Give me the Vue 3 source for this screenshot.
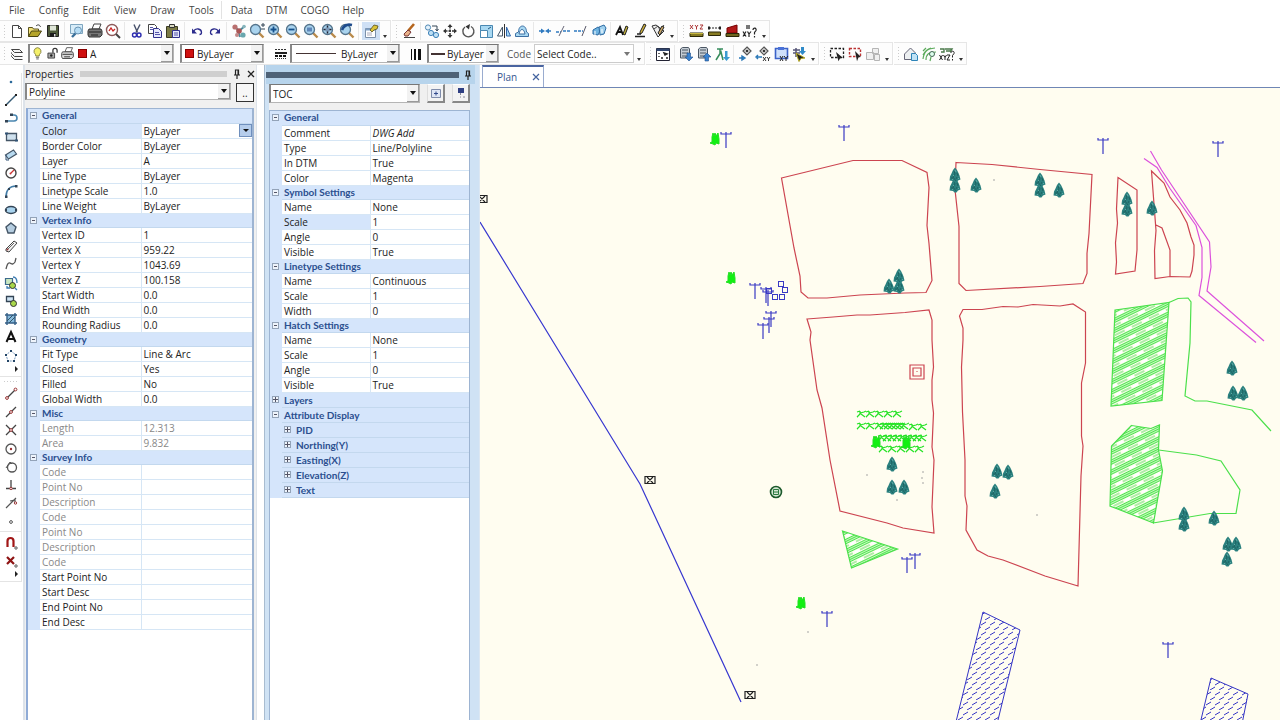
<script setup>
import { ref } from 'vue'

const menus = [
  ['File', 'Config', 'Edit', 'View', 'Draw', 'Tools'],
  ['Data', 'DTM', 'COGO', 'Help'],
]

const lens = (c) =>
  `<path d="M10.5 10.5l5 5" stroke="#b98a4a" stroke-width="2.4"/><circle cx="7.5" cy="7.5" r="5" fill="#a9d3ee" stroke="#55748c" stroke-width="1.3"/>${c}`
const printer = (body) =>
  `<path d="M6 7l2-5h7l-2 5z" fill="#fff" stroke="#444"/><path d="M3 7h12l1 2v4l-2 2H3l-1-2V9z" fill="${body}" stroke="#333"/><path d="M3 10h12M5 13h7" stroke="#222"/>`

const icons = {
  new: '<path d="M4.500 3.500h6l3 3v9h-9z" fill="#fff" stroke="#444"/><path d="M10.500 3.500v3h3" fill="none" stroke="#444"/>',
  open: '<path d="M2.500 14.500v-9h4l1 1.500h5v2" fill="#f3e27a" stroke="#5a5320"/><path d="M2.500 14.500l3-5.500h10l-3.500 5.500z" fill="#b5a52a" stroke="#4a4410"/><path d="M10 4c2-2 4-1 4.500 1" fill="none" stroke="#333"/>',
  save: '<path d="M3.500 3.500h11v11h-11z" fill="#4e5a3a" stroke="#222"/><path d="M6 3.500h6v5H6z" fill="#dfe6d8"/><path d="M6 11h6v3.500H6z" fill="#1c1c1c"/><path d="M10 12h1.500v2.500H10z" fill="#ddd"/>',
  preview: '<path d="M2.500 2.500h12v9h-12z" fill="#d7ecf8" stroke="#7fa6c0"/><path d="M4 15l4-4" stroke="#3a6f9a" stroke-width="2.400"/><circle cx="10" cy="8.500" r="3.500" fill="#b6ddf5" stroke="#6a94b4"/>',
  print: printer('#777'),
  printGrey: printer('#d9d9d9'),
  find: '<circle cx="8" cy="8" r="5.500" fill="#fff" stroke="#8c5a5a" stroke-width="1.400"/><path d="M12 12l4 4" stroke="#444" stroke-width="2"/><path d="M5 9l2-3 2 3 2-2" stroke="#c22" fill="none" stroke-width="1.300"/>',
  cut: '<path d="M6 2.500l3.500 8M12 2.500l-4 8" stroke="#46506a" stroke-width="1.400"/><circle cx="6.500" cy="13" r="2" fill="none" stroke="#2c2cb0" stroke-width="1.400"/><circle cx="11" cy="13" r="2" fill="none" stroke="#2c2cb0" stroke-width="1.400"/>',
  copy: '<path d="M2.500 2.500h6l2 2v7h-8z" fill="#fff" stroke="#444"/><path d="M7.500 6.500h5l3 3v6h-8z" fill="#e6e9fb" stroke="#33338f"/><path d="M9 10.500h4M9 12.500h5M4 5.500h3M4 7.500h3" stroke="#55a"/>',
  paste: '<path d="M2.500 4.500h11v11h-11z" fill="#7b7a45" stroke="#3a3a22"/><path d="M5.500 2.500h5v3h-5z" fill="#d8d8c0" stroke="#333"/><path d="M8.500 8.500h7v7h-7z" fill="#e6e9fb" stroke="#33338f"/><path d="M10 11h4M10 13h4" stroke="#55a"/>',
  undo: '<path d="M5.500 9.500c2-4 8-3 8 1 0 1-1 2-2 2" fill="none" stroke="#2b2b8c" stroke-width="1.300"/><path d="M4 6.500v5h5z" fill="#2b2b8c"/>',
  redo: '<path d="M12.500 9.500c-2-4-8-3-8 1 0 1 1 2 2 2" fill="none" stroke="#2b2b8c" stroke-width="1.300"/><path d="M14 6.500v5H9z" fill="#2b2b8c"/>',
  node: '<path d="M4 4l5 5 6-5M8 9l2 6" stroke="#4d8a9b" stroke-width="2" fill="none"/><circle cx="5" cy="5" r="2.600" fill="#b97070"/><circle cx="9" cy="9" r="2.800" fill="#a55"/><circle cx="13" cy="13" r="2.600" fill="#6aa7ae"/><circle cx="7" cy="13" r="2" fill="#c38a8a"/><circle cx="14" cy="4.500" r="1.800" fill="#88b5bd"/>',
  zoomDyn: lens('<path d="M13 3h4M15 1v4M13 7h4" stroke="#345" stroke-width="1"/>'),
  zoomIn: lens('<path d="M4.500 7.500h6M7.500 4.500v6" stroke="#14508c" stroke-width="1.800"/>'),
  zoomOut: lens('<path d="M4.500 7.500h6" stroke="#14508c" stroke-width="1.800"/>'),
  zoomWin: lens('<path d="M5 5.500h5v4H5z" fill="#5f86b8"/>'),
  zoomExt: lens('<path d="M3.500 7.500h8M7.500 3.500v8" stroke="#223" stroke-width="1.500"/><path d="M5.500 5.500h4v4h-4z" fill="#7b98b8"/>'),
  zoomPrev: lens('<path d="M4 8c2-5 6-6 10-5" stroke="#1d4a8c" stroke-width="2.600" fill="none"/>'),
  props: '<path d="M3.500 6.500h10v9h-10z" fill="#fff" stroke="#7b8fa8"/><path d="M3.500 6.500h10v2h-10z" fill="#7f9fc4"/><path d="M5 11h5M5 13h5" stroke="#aab"/><path d="M8 8l4-5 4 1-1 3-3 1-2 2z" fill="#d9c23a" stroke="#59511c" stroke-width=".8"/>',
  erase: '<path d="M8 9l6-7" stroke="#b5651d" stroke-width="2.600"/><path d="M4 12l4-4 3 2-3 4H5z" fill="#e8b28a" stroke="#733"/><path d="M4 15.500h11" stroke="#444"/>',
  copyObj: '<circle cx="5" cy="5.500" r="2.600" fill="#e3f1fb" stroke="#4f88b4"/><circle cx="8" cy="11" r="2.600" fill="#bfe0f5" stroke="#3f82b8"/><circle cx="13" cy="13" r="2.600" fill="#bfe0f5" stroke="#3f82b8"/><path d="M9 4h5v4M12.500 7l1.500 2 1.500-2" fill="none" stroke="#345"/>',
  move: '<path d="M9 4v10M4 9h10" stroke="#333" stroke-width="1.500" stroke-dasharray="2.500 1"/><path d="M9 2l2.500 3h-5zM9 16l2.500-3h-5zM2 9l3-2.500v5zM16 9l-3-2.500v5z" fill="#333"/>',
  rotate: '<path d="M6 5a5.500 5.500 0 1 0 6-.5" fill="none" stroke="#555" stroke-width="1.400"/><path d="M11 2L6.500 4.500l3.500 3z" fill="#333"/>',
  scale: '<path d="M3.500 3.500h12v12h-12z" fill="#a8d8f2" stroke="#4a88b2"/><path d="M3.500 8.500h7v7h-7z" fill="#fff" stroke="#4a88b2"/><path d="M11 7l3-2" stroke="#24587f"/>',
  mirror: '<path d="M7.500 5v9h-5z" fill="#fff" stroke="#456"/><path d="M11.500 5v9h4z" fill="#a8d8f2" stroke="#36a"/><path d="M9.500 2v14" stroke="#333"/>',
  offset: '<path d="M2.500 14.500v-3l3-1.500c0-8 8-8 8 0l2 1.500v3z" fill="#a8d8f2" stroke="#3d6fa3"/><path d="M6 12c1-6 5-6 6 0z" fill="#fff" stroke="#3d6fa3"/>',
  join: '<path d="M3 9h4M11 9h4" stroke="#2f7ac0" stroke-width="1.400"/><path d="M5 6.500L9 9l-4 2.500zM13 6.500L9 9l4 2.500z" fill="#2f7ac0"/>',
  trim: '<path d="M2 10h5M9 9h7" stroke="#2f7ac0" stroke-width="1.400" stroke-dasharray="3 1"/><path d="M5 14l5-10" stroke="#667"/>',
  extend: '<path d="M2 9h9" stroke="#2f7ac0" stroke-width="1.400" stroke-dasharray="3 1"/><path d="M10 14l4-10" stroke="#556"/>',
  explode: '<path d="M3 8l5-3 3 2-3 6-5-1z" fill="#6fb3e0" stroke="#2d6ba3"/><path d="M9 5l5-2 2 3-2 6-4 1z" fill="#9fd0ee" stroke="#2d6ba3"/><path d="M5 9v4M12 7v4" stroke="#fff"/>',
  textEdit: '<path d="M3 13L7 5l3 8M5 10h4" fill="none" stroke="#111" stroke-width="1.800"/><path d="M10 12l3-8 2 1-3 8z" fill="#c5b33c" stroke="#222"/>',
  pencil: '<path d="M9 10l4-8 2 1-4 8-2 1z" fill="#d4b53a" stroke="#222"/><path d="M4 14.500h10M6 12h4" stroke="#222" stroke-width="1.600"/>',
  tagEdit: '<path d="M3 4l4-1 8 6-6 6z" fill="#eee" stroke="#333"/><path d="M5 7l4-3 2 4 4-5" stroke="#444" fill="none"/><path d="M9 11l4-7 2 1-4 8z" fill="#c9a86a" stroke="#222"/>',
  xyz: '<path d="M3 3l3 4M6 3L3 7M8 3l1.500 2L11 3M9.500 5v2.500M13 3h3l-3 4h3" stroke="#a33" fill="none"/><path d="M3 11h13v3.500H3z" fill="#877b22" stroke="#2c2808"/><path d="M3 11.500h13" stroke="#c8b840"/>',
  dist: '<path d="M4 6h11" stroke="#222" stroke-dasharray="2 1"/><path d="M3 4.500h2v3H3zM14 4.500h2v3h-2z" fill="#222"/><path d="M3.500 10h12v3.500h-12z" fill="#877b22" stroke="#2c2808"/>',
  area: '<path d="M4 11V6l10-3v8z" fill="#b11818" stroke="#700"/><path d="M3 11.500h13v3H3z" fill="#6f661f" stroke="#2c2808"/>',
  ask: '<path d="M5 3h4v4H5z" fill="#777"/><path d="M2 9.500l3 5M5 9.500l-3 5M6.500 9.500L8 12l2-2.500M8 12v3M12 8c0-3 4-2 3 .5l-1.500 2v2M13.500 14v1.500" stroke="#222" fill="none" stroke-width="1.200"/>',
  layers: '<path d="M3.500 4.500h8l3 3h-8zM3.500 7.500v1l3 3h8M3.500 10.500v1l3 3h8" fill="#f4f4f4" stroke="#444"/>',
  bulb: '<path d="M9 2a4.500 4.500 0 0 1 2.500 8l-.5 2H7l-.5-2A4.500 4.500 0 0 1 9 2z" fill="#f4f06a" stroke="#77742a"/><path d="M7 13.500h4M7.500 15.500h3" stroke="#444"/>',
  lock: '<path d="M3.500 8.500h8v6h-8z" fill="#aaa" stroke="#333"/><path d="M9.500 8V5c0-3 5-3 5 0v3" fill="none" stroke="#333" stroke-width="1.500"/><circle cx="7.500" cy="11.500" r="1.500" fill="#222"/>',
  linetypes: '<path d="M3 4.500h12" stroke="#333" stroke-dasharray="2 1"/><path d="M3 8h12" stroke="#222" stroke-width="2"/><path d="M3 11h12" stroke="#111" stroke-width="2" stroke-dasharray="3 1"/><path d="M3 13.500h12" stroke="#333" stroke-dasharray="1 1"/>',
  weights: '<path d="M4.500 4v11" stroke="#111"/><path d="M8 4v11" stroke="#111" stroke-width="2"/><path d="M12.500 4v11" stroke="#111" stroke-width="3"/>',
  window: '<path d="M2.500 3.500h13v12h-13z" fill="#fff" stroke="#223"/><path d="M2.500 3.500h13v2.500h-13z" fill="#31466f"/><path d="M5 8v1M5 11v1M7 13h2M10 8l3 1-2 1zM12 13h2" stroke="#222" fill="none" stroke-width="1.400"/>',
  dbDown: '<path d="M3.500 4l2-1.500h6l1 1.500v9h-9z" fill="#c5cdd5" stroke="#4b5663"/><path d="M5 5h6M5 8h6M5 11h6" stroke="#4b5663"/><path d="M10 8h3.500v4H16l-4 4-4-4h2z" fill="#3a83d0" stroke="#1f4e8c" stroke-width=".6"/>',
  dbUp: '<path d="M3.500 4l2-1.500h6l1 1.500v9h-9z" fill="#c5cdd5" stroke="#4b5663"/><path d="M5 5h6M5 8h6M5 11h6" stroke="#4b5663"/><path d="M10 16h3.500v-4H16l-4-4-4 4h2z" fill="#3a83d0" stroke="#1f4e8c" stroke-width=".6"/>',
  survey: '<path d="M3 15l5-8 2 8M4 4h6M7 4v4" fill="none" stroke="#368c5c" stroke-width="1.500"/><path d="M12 6h2.500v6H17l-3.500 4-3.500-4h2z" fill="#3a9bd0"/>',
  ptMove: '<path d="M11 2l4 4-4 4-4-4z" fill="#ddd" stroke="#555" stroke-width="1.200"/><circle cx="11" cy="6" r="1.300" fill="#333"/><path d="M3 13h4M6 11l3 2-3 2z" stroke="#2a78b8" fill="#2a78b8" stroke-width="1.400"/>',
  ptXy: '<path d="M10 2l4 4-4 4-4-4z" fill="#ddd" stroke="#555" stroke-width="1.200"/><circle cx="10" cy="6" r="1.300" fill="#333"/><path d="M3 12h5M4 10l-2 2 2 2" stroke="#2a78b8" fill="none" stroke-width="1.400"/><path d="M9 12l3 4M12 12l-3 4M13 12l1.500 2L16 12M14.500 14v2" stroke="#333" fill="none"/>',
  clipXy: '<path d="M3.500 3.500h12v10h-12z" fill="#cfe0fb" stroke="#3b62c8" stroke-width="1.600"/><path d="M6 2h6v3H6z" fill="#4a72d8"/><path d="M8 11l3 5M11 11l-3 5M12 11l2 2.500 2-2.500M14 13.500V16" stroke="#222" fill="none"/>',
  snapPick: '<path d="M3 5h7M3 8h7M6 3v9" stroke="#557" stroke-width="1.500"/><path d="M11 2h3v4h2l-3.500 4L9 6h2z" fill="#2f8ac8"/><path d="M6 8l9 5-4 .5-2 3z" fill="#222" stroke="#b5a820"/>',
  selRect: '<path d="M2.500 3.500h13v9h-13z" fill="none" stroke="#222" stroke-width="1.300" stroke-dasharray="2.500 1.500"/><path d="M8 7l7 6-3 .3-1.500 3z" fill="#222"/>',
  selRed: '<path d="M3.500 3.500h11v8h-11z" fill="none" stroke="#b33" stroke-width="1.400" stroke-dasharray="2.500 1.500"/><path d="M9 6l6 6-2.500.3-1.500 4z" fill="#222"/>',
  group: '<path d="M2.500 7.500h7v7h-7zM8.500 3.500h6v5h-6zM10.500 9.500h5v6h-5z" fill="#f0f0f0" stroke="#b5b5b5"/>',
  house: '<path d="M2.500 9l6-6 5 5v6.500h-11z" fill="#eceff1" stroke="#667"/><path d="M9.500 8.500h4l2 2v5h-6z" fill="#bfe2f5" stroke="#2d84b8"/>',
  contour: '<path d="M3 14c1-7 3-10 12-11M6 15c0-6 3-8 10-8M3 10c2-4 4-6 8-7M3 6l3-3M10 16l1-4" fill="none" stroke="#5cab5c" stroke-width="1.200"/><circle cx="12" cy="9" r="2.500" fill="#dfe" stroke="#465"/>',
  xyzAsk: '<path d="M2 4h4v3H3M7 4h7l-2 3M8 6h4" stroke="#4b7a4b" fill="none" stroke-width="1.400"/><path d="M1.500 10l3 5M4.500 10l-3 5M5.500 10L7 12.500 8.500 10M7 12.500V15M9 10h3l-3 5h3M13 8c0-3 4-2 3 .5l-1.500 2v2M14.500 14v1.500" stroke="#222" fill="none"/>',
  point: '<circle cx="9" cy="9" r="1.300" fill="#2c6a9a"/>',
  line: '<path d="M4 14L14 4" stroke="#345a75" stroke-width="1.400"/><path d="M3 13h2v2H3zM13 3h2v2h-2z" fill="#222"/>',
  polyline: '<path d="M4 12h8c4 0 4-6 0-6h-2" stroke="#4b87b0" stroke-width="1.600" fill="none"/><path d="M3 11h3v2.500H3zM8 4.500h3V7H8z" fill="#345"/>',
  rect: '<path d="M4.500 5.500h10v7h-10z" fill="#cfe1ee" stroke="#456" stroke-width="1.300"/><path d="M3 4.500h3v2H3zM13 11.500h3v2h-3z" fill="#357"/>',
  rotRect: '<path d="M3.500 9l8-5 3 4-8 5z" fill="#b8daf0" stroke="#456" stroke-width="1.200"/><path d="M4 9v5h3" stroke="#357" fill="none"/>',
  circle: '<circle cx="9" cy="9" r="5" fill="#fff" stroke="#444" stroke-width="1.400"/><path d="M9 9l3-3" stroke="#c33" stroke-width="1.300"/><circle cx="8.500" cy="9.500" r="1" fill="#c33"/>',
  arc: '<path d="M4 15C4 8 8 4 14 4" fill="none" stroke="#3f7aa5" stroke-width="1.600"/><path d="M3 13.500h2.500V16H3zM13 3h2.500v2.500H13zM6 6h2v2H6z" fill="#345"/>',
  ellipse: '<ellipse cx="9" cy="9" rx="5.500" ry="3.500" fill="#a9d3ee" stroke="#345" stroke-width="1.500"/><path d="M3 8h2v2H3zM13 8h2v2h-2z" fill="#345"/>',
  polygon: '<path d="M9 4l5 4-2 6H6L4 8z" fill="#b5cde0" stroke="#456" stroke-width="1.400"/>',
  ruler: '<path d="M4 12l8-8 3 2-8 9-3-1z" fill="#f3f3f3" stroke="#444"/><path d="M6 12l6-6" stroke="#666"/><circle cx="5.500" cy="12.500" r="1" fill="#933"/>',
  spline: '<path d="M4 14c1-4 2-7 4-6s3 2 5-1l1-4" fill="none" stroke="#555" stroke-width="1.300"/>',
  blockIn: '<path d="M3.500 4.500h7v6h-7z" fill="#c9e7c0" stroke="#3c6a8c" stroke-width="1.200"/><circle cx="10.500" cy="11.500" r="3" fill="#a9d84a" stroke="#333"/><path d="M11 3c3 0 4 2 4 6M5 12v2h3M13 14l2 2" fill="none" stroke="#3b7ab0" stroke-width="1.300"/>',
  block: '<path d="M4.500 4.500h7v5h-7z" fill="#cfe4f4" stroke="#345" stroke-width="1.300"/><circle cx="11.500" cy="11.500" r="3" fill="#a9d84a" stroke="#333"/>',
  hatch: '<path d="M5 5h8v8H5z" fill="#86b9dc"/><path d="M5 3v12M13 3v12M3 5h12M3 13h12" stroke="#345f86" stroke-width="1.400"/><path d="M5 11l6-6M7 13l6-6" stroke="#356"/>',
  text: '<path d="M4.500 14L9 4l4.500 10M6 11h6" fill="none" stroke="#111" stroke-width="2"/>',
  points: '<path d="M9 4l5 4-2 6H6L4 8z" fill="none" stroke="#79b" stroke-dasharray="2 1"/><path d="M8 3h2v2H8zM13 7h2v2h-2zM11 13h2v2h-2zM5 13h2v2H5zM3 7h2v2H3z" fill="#246"/>',
  snapEnd: '<path d="M5 13l8-8" stroke="#444" stroke-width="1.200"/><circle cx="5" cy="13" r="1.400" fill="#fff" stroke="#933"/><circle cx="13.500" cy="4.500" r="1.400" fill="#fff" stroke="#933"/>',
  snapMid: '<path d="M4 14L14 4" stroke="#444" stroke-width="1.200"/><circle cx="9" cy="9" r="1.400" fill="#fff" stroke="#933"/>',
  snapInt: '<path d="M4 4l10 10M14 4L4 14" stroke="#444" stroke-width="1.300"/><circle cx="9" cy="9" r="1.400" fill="#fff" stroke="#933"/>',
  snapCen: '<circle cx="9" cy="9" r="5" fill="none" stroke="#555" stroke-width="1.300"/><circle cx="9" cy="9" r="1.200" fill="#933"/>',
  snapQuad: '<circle cx="10" cy="9.500" r="4.500" fill="none" stroke="#555" stroke-width="1.300"/><path d="M4 10l4-6 2 2" fill="none" stroke="#555"/>',
  snapPerp: '<path d="M9 4v8M4 12.500h10" stroke="#444" stroke-width="1.300"/><circle cx="9" cy="12.500" r="1.200" fill="#fff" stroke="#933"/>',
  snapNear: '<path d="M4 14L14 4M8 7l5-1v4" fill="none" stroke="#555" stroke-width="1.200"/><circle cx="13.500" cy="9" r="1.200" fill="#fff" stroke="#933"/>',
  snapNode: '<circle cx="9" cy="9" r="1.400" fill="#fff" stroke="#555"/>',
  magnet: '<path d="M5.500 13V7c0-4 6-4 6 0v6" fill="none" stroke="#a11616" stroke-width="2.200"/><circle cx="14" cy="14" r="1.200" fill="#fff" stroke="#555"/>',
  snapOff: '<path d="M5 5l7 7M12 5l-7 7" stroke="#8f1414" stroke-width="2.200"/><circle cx="14" cy="14" r="1.200" fill="#fff" stroke="#555"/>',
}

const topBars = [
  [['new', 'open', 'save'], ['preview', 'print', 'find'], ['cut', 'copy', 'paste'], ['undo', 'redo'], ['node', 'zoomDyn', 'zoomIn', 'zoomOut', 'zoomWin', 'zoomExt', 'zoomPrev'], ['props']],
  [['erase'], ['copyObj', 'move', 'rotate', 'scale', 'mirror', 'offset'], ['join', 'trim', 'extend', 'explode'], ['textEdit', 'pencil', 'tagEdit']],
  [['xyz', 'dist', 'area', 'ask']],
]
const dataBars = [
  [['window'], ['dbDown', 'dbUp', 'survey'], ['ptMove', 'ptXy', 'clipXy', 'snapPick']],
  [['selRect', 'selRed', 'group']],
  [['house', 'contour', 'xyzAsk']],
]
const drawTools = ['point', 'line', 'polyline', 'rect', 'rotRect', 'circle', 'arc', 'ellipse', 'polygon', 'ruler', 'spline', 'blockIn', 'block', 'hatch', 'text', 'points']
const snapTools = ['snapEnd', 'snapMid', 'snapInt', 'snapCen', 'snapQuad', 'snapPerp', 'snapNear', 'snapNode']
const snapModes = ['magnet', 'snapOff']

const blank = (names, off) => names.map((n) => ({ n, v: '', off }))
const properties = [
  { title: 'General', rows: [
    { n: 'Color', v: 'ByLayer', sel: true, drop: true }, { n: 'Border Color', v: 'ByLayer' }, { n: 'Layer', v: 'A' },
    { n: 'Line Type', v: 'ByLayer' }, { n: 'Linetype Scale', v: '1.0' }, { n: 'Line Weight', v: 'ByLayer' } ] },
  { title: 'Vertex Info', rows: [
    { n: 'Vertex ID', v: '1' }, { n: 'Vertex X', v: '959.22' }, { n: 'Vertex Y', v: '1043.69' }, { n: 'Vertex Z', v: '100.158' },
    { n: 'Start Width', v: '0.0' }, { n: 'End Width', v: '0.0' }, { n: 'Rounding Radius', v: '0.0' } ] },
  { title: 'Geometry', rows: [
    { n: 'Fit Type', v: 'Line & Arc' }, { n: 'Closed', v: 'Yes' }, { n: 'Filled', v: 'No' }, { n: 'Global Width', v: '0.0' } ] },
  { title: 'Misc', rows: [ { n: 'Length', v: '12.313', off: true }, { n: 'Area', v: '9.832', off: true } ] },
  { title: 'Survey Info', rows: [
    ...blank(['Code', 'Point No', 'Description', 'Code', 'Point No', 'Description', 'Code'], true),
    ...blank(['Start Point No', 'Start Desc', 'End Point No', 'End Desc'], false) ] },
]
const toc = [
  { title: 'General', rows: [
    { n: 'Comment', v: 'DWG Add', em: true }, { n: 'Type', v: 'Line/Polyline' }, { n: 'In DTM', v: 'True' }, { n: 'Color', v: 'Magenta' } ] },
  { title: 'Symbol Settings', rows: [
    { n: 'Name', v: 'None' }, { n: 'Scale', v: '1', sel: true }, { n: 'Angle', v: '0' }, { n: 'Visible', v: 'True' } ] },
  { title: 'Linetype Settings', rows: [ { n: 'Name', v: 'Continuous' }, { n: 'Scale', v: '1' }, { n: 'Width', v: '0' } ] },
  { title: 'Hatch Settings', rows: [
    { n: 'Name', v: 'None' }, { n: 'Scale', v: '1' }, { n: 'Angle', v: '0' }, { n: 'Visible', v: 'True' } ] },
  { title: 'Layers', closed: true, rows: [] },
  { title: 'Attribute Display', rows: [], subs: ['PID', 'Northing(Y)', 'Easting(X)', 'Elevation(Z)', 'Text'] },
]
const panels = [
  { key: 'props', data: properties },
  { key: 'toc', data: toc },
]
const objectType = ref('Polyline')
const tocType = ref('TOC')

const trees = [[976, 185], [1059, 190], [1152, 208], [889, 286], [892, 464], [892, 487], [904, 487], [997, 471], [1008, 472], [995, 491], [1232, 368], [1233, 393], [1243, 393], [1214, 518], [1228, 544], [1236, 544], [1227, 559]]
const tallTrees = [[955, 180], [1040, 185], [1127, 204], [899, 281], [1184, 519]]
const poles = [[726, 132], [844, 125], [1103, 138], [1218, 141], [755, 283], [766, 287], [768, 290], [771, 311], [769, 317], [763, 323], [907, 557], [915, 553], [827, 611], [1168, 642]]
const boxes = [[781, 284], [785, 290], [782, 297], [775, 297], [769, 291]]
const bushes = [[715, 138], [731, 277], [801, 602], [876, 441], [906, 442]]
const stations = [[482, 199], [650, 480], [750, 695]]
const specks = [[994, 180], [867, 475], [923, 472], [922, 478], [923, 483], [897, 500], [1037, 515], [808, 632], [757, 665]]
const range = (a, b, y, step = 9) => Array.from({ length: Math.floor((b - a) / step) + 1 }, (_, i) => [a + i * step, y])
const grass = [...range(861, 898, 414), ...range(861, 880, 426), ...range(884, 906, 426, 4), ...range(913, 923, 427), ...range(882, 926, 438, 5), ...range(883, 922, 449)]
</script>

<template>
  <main class="app">
    <nav class="menu">
      <div v-for="(g, i) in menus" :key="i" class="menu-group">
        <button v-for="m in g" :key="m" type="button">{{ m }}</button>
      </div>
    </nav>

    <div class="bars">
      <div v-for="(bar, i) in topBars" :key="i" class="bar">
        <span class="grip"></span>
        <div v-for="(g, j) in bar" :key="j" class="group">
          <button v-for="n in g" :key="n" type="button" class="tool" :class="{ active: n === 'props' }" :aria-label="n">
            <svg viewBox="0 0 18 18" v-html="icons[n]"></svg>
          </button>
        </div>
        <button type="button" class="more" aria-label="More"></button>
      </div>
    </div>

    <div class="bars">
      <div class="bar layer-bar">
        <span class="grip"></span>
        <button type="button" class="tool" aria-label="Layers"><svg viewBox="0 0 18 18" v-html="icons.layers"></svg></button>
        <div class="combo layer">
          <svg v-for="n in ['bulb', 'lock', 'printGrey']" :key="n" class="state" viewBox="0 0 18 18" v-html="icons[n]"></svg>
          <span class="swatch"></span>
          <select aria-label="Layer"><option>A</option></select><i class="arrow"></i>
        </div>
        <div class="combo color">
          <span class="swatch"></span>
          <select aria-label="Color"><option>ByLayer</option></select><i class="arrow"></i>
        </div>
        <button type="button" class="tool types" aria-label="Line types"><svg viewBox="0 0 18 18" v-html="icons.linetypes"></svg></button>
        <div class="combo ltype">
          <span class="stroke"></span>
          <select aria-label="Line type"><option>ByLayer</option></select><i class="arrow"></i>
        </div>
        <button type="button" class="tool weights" aria-label="Line weights"><svg viewBox="0 0 18 18" v-html="icons.weights"></svg></button>
        <div class="combo weight">
          <span class="stroke thick"></span>
          <select aria-label="Line weight"><option>ByLayer</option></select><i class="arrow"></i>
        </div>
        <label class="code" for="code">Code</label>
        <div class="combo flat">
          <select id="code"><option>Select Code..</option></select><i class="arrow"></i>
        </div>
        <button type="button" class="more" aria-label="More"></button>
      </div>
      <div v-for="(bar, i) in dataBars" :key="i" class="bar">
        <span class="grip"></span>
        <div v-for="(g, j) in bar" :key="j" class="group">
          <button v-for="n in g" :key="n" type="button" class="tool" :aria-label="n">
            <svg viewBox="0 0 18 18" v-html="icons[n]"></svg>
          </button>
        </div>
        <button type="button" class="more" aria-label="More"></button>
      </div>
    </div>

    <div class="work">
      <aside class="rail">
        <div class="rail-bar">
          <button v-for="n in drawTools" :key="n" type="button" class="tool" :aria-label="n"><svg viewBox="0 0 18 18" v-html="icons[n]"></svg></button>
          <button type="button" class="side" aria-label="More"></button>
        </div>
        <div class="rail-bar snaps">
          <span class="grip flatgrip"></span>
          <button v-for="n in snapTools" :key="n" type="button" class="tool" :aria-label="n"><svg viewBox="0 0 18 18" v-html="icons[n]"></svg></button>
          <div class="modes">
            <button v-for="n in snapModes" :key="n" type="button" class="tool" :aria-label="n"><svg viewBox="0 0 18 18" v-html="icons[n]"></svg></button>
            <button type="button" class="side" aria-label="More"></button>
          </div>
        </div>
      </aside>

      <section v-for="p in panels" :key="p.key" class="panel" :class="p.key">
        <header>
          <h2 v-if="p.key === 'props'">Properties</h2>
          <span class="drag"></span>
          <button type="button" class="pin" aria-label="Pin">
            <svg viewBox="0 0 10 10"><path d="M3.500 1h3v5h-3zM2 6h6M5 6v4" fill="none" stroke="#222" stroke-width="1.200" /><path d="M5.500 1h1.500v5H5.500z" fill="#222" /></svg>
          </button>
          <button v-if="p.key === 'props'" type="button" class="pin" aria-label="Close">
            <svg viewBox="0 0 10 10"><path d="M2 2l6 6M8 2L2 8" stroke="#222" stroke-width="1.300" /></svg>
          </button>
        </header>
        <div class="picker">
          <div class="combo">
            <select v-if="p.key === 'props'" v-model="objectType" aria-label="Object type"><option>Polyline</option></select>
            <select v-else v-model="tocType" aria-label="Contents"><option>TOC</option></select>
            <i class="arrow"></i>
          </div>
          <button v-if="p.key === 'props'" type="button" class="dots">..</button>
          <template v-else>
            <button type="button" class="raised" aria-label="Add">
              <svg viewBox="0 0 12 12"><path d="M1.500 2.500h9v8h-9z" fill="#dfe6f5" stroke="#7f8cab" /><path d="M6 4.500v4M4 6.500h4" stroke="#334a8c" /></svg>
            </button>
            <button type="button" class="raised" aria-label="Assign">
              <svg viewBox="0 0 12 12"><path d="M3 1h6v5H3z" fill="#2f3f83" /><path d="M5.500 6v2M5 10h1M8 10h2" stroke="#889" /></svg>
            </button>
          </template>
        </div>
        <div class="sheet">
          <table>
            <colgroup><col class="c-gut" /><col class="c-name" /><col /></colgroup>
            <tbody v-for="s in p.data" :key="s.title">
              <tr class="cat" :class="{ tall: !s.rows.length }">
                <th class="gut"><button type="button" class="toggle" :class="{ plus: s.closed }" :aria-label="s.title"></button></th>
                <th colspan="2">{{ s.title }}</th>
              </tr>
              <tr v-for="(r, i) in s.rows" :key="i" :class="{ off: r.off, sel: r.sel }">
                <td class="gut"></td>
                <td class="name">{{ r.n }}</td>
                <td class="val" :class="{ em: r.em }">
                  <div class="cell"><span>{{ r.v }}</span><button v-if="r.drop" type="button" class="drop" aria-label="Choose color"></button></div>
                </td>
              </tr>
              <tr v-for="s2 in s.subs" :key="s2" class="sub">
                <td class="gut"></td>
                <th colspan="2"><div class="cell"><button type="button" class="toggle plus" :aria-label="s2"></button>{{ s2 }}</div></th>
              </tr>
            </tbody>
          </table>
        </div>
      </section>

      <section class="view">
        <div class="tabs">
          <div class="tab"><a href="#plan">Plan</a>
            <button type="button" aria-label="Close plan"><svg viewBox="0 0 8 8"><path d="M1 1l6 6M7 1L1 7" stroke="#4464a0" stroke-width="1.200" /></svg></button>
          </div>
        </div>
        <svg class="plan" viewBox="480 88 800 632" preserveAspectRatio="xMinYMin slice">
          <defs>
            <pattern id="hg" width="19" height="9" patternUnits="userSpaceOnUse" patternTransform="rotate(-26)">
              <path d="M0 2.500h19" stroke="#a4f4a0" stroke-width="5" opacity=".6" />
              <path d="M0 .5h19M0 2.500h19M0 4.500h19" stroke="#4fe64f" stroke-width="1" />
              <path d="M0 7h11" stroke="#5fdc5f" />
              <path d="M13 7h5" stroke="#fff" stroke-width="2.500" />
            </pattern>
            <pattern id="hb" width="9" height="10" patternUnits="userSpaceOnUse">
              <path d="M0 5l5-3M4 10l5-3" stroke="#3434c4" />
            </pattern>
            <g id="tree">
              <path d="M0-7.500l2 2.500 1.500 3 1 2.500 1 4-2.500 1-1.500 2h-2l-1.500-1.500-3.500-.5.500-4 1.500-3L-2-5z" fill="#2a807e" />
              <path d="M-1-4l1 3-2 3 3 4M2-2l1 3M-3 2v2M2 2l-1 2" stroke="#1a5c5b" fill="none" stroke-width=".8" />
              <path d="M0-5l1 2M-2 0l1 1M3 3l1 1M-3 4l1 1" stroke="#5fa9a4" fill="none" />
            </g>
            <g id="pole"><path d="M-5 0v2H5V0M0 0v16" fill="none" stroke="#3a3ac4" stroke-width="1.200" /></g>
            <path id="tuft" d="M-4-2l3-1M-1-3l0 2 4-1 2-1M0-1l-4 4M0 0l4 3M-3 3h-1" fill="none" stroke="#24e224" stroke-width="1.200" />
            <path id="bush" d="M-5 5l2-1V-1l1-4 1 3 1-3 1 3 2-3 1 6v5l-3-1-1 2-2-1z" fill="#12f012" stroke="#22e022" />
          </defs>
          <g class="red">
            <path d="M781.500 178L853 160.500h49l25 12 2 15-2 38 2 18 3 37-6 12-21 .5-45 2-33 3h-19l-7-6-1-16-6-28z" />
            <path d="M956 162.500l36 2 48 5 52 5-3 59-2 20v20l-4 10-43 3-74 4-7-7v-57l-4-37z" />
            <path d="M807 319l26-2 24-2h13l35-2.500 24-2.500 3 10v20l1.500 27-1.500 13v20l1.500 13-1.500 34 2 13-2 47 2 26-31-5-16-5-47-12-10-51-8-52-5-18-7-50 1-8z" />
            <path d="M963 309.500h19l21-3 15 .5 15-2.500 27 1.500 13-2 12.500 8v51l-4 20v53l1.500 10-2 30-3 110-33-10-42-16-15-4-11-6-11-20 1-24-2-10v-36l-2.500-48-1-45 1.500-27v-12l-3.500-12z" />
            <path d="M1118 177.500l19 12.500v60l-2 21-19.500 3 1-12-1-19 2-20-1-14z" />
            <path d="M1151.500 171l12.500 12 6 14 10 13 7 13 4 14 3 8v10l-2 16-2 6-20-.5-15 2-.5-28 1.500-20zM1156 225l6 3 8 22v26" />
            <path d="M910 365h14v14h-14zM913 368h8v8h-8zM916.500 371.500h1" />
          </g>
          <g class="magenta">
            <path d="M1144 158.500l13 9 13 21 26 37 6 22v30l-3 18 57 47" />
            <path d="M1150.500 151l11 19 48 72 1.500 25-4 24 57 50" />
          </g>
          <g class="green">
            <path class="hatched" d="M1115 310l54-7.500-7 98-51 5.500z" />
            <path d="M1169 302.500l9-4 10-.5 3 4-1 41-5 53 10 5h12l45 9 19 21" />
            <path class="hatched" d="M1131.500 425.500l19.500 3 8.500-3.500-1 25 4 21-9 52-43.500-17 1.500-60z" />
            <path d="M1158.500 450l38 5 24.500 6 19 29-4 23.500h-26l-57 9.500" />
            <path class="hatched" d="M842.500 531l55 18-46 19z" />
          </g>
          <path d="M480 222l160 262 101 218" fill="none" stroke="#3737cf" stroke-width="1.200" />
          <g class="blue">
            <path d="M983 612l37 18-22 90-2 10h-42z" />
            <path d="M1211 678l37 16-6 30h-42z" />
          </g>
          <g v-for="(s, i) in stations" :key="'s' + i" :transform="`translate(${s[0]} ${s[1]})`">
            <path d="M-5-3.500H5v7H-5zM-3-3l6 6M3-3l-6 6" fill="none" stroke="#222" stroke-width="1.200" />
          </g>
          <use v-for="(t, i) in grass" :key="'g' + i" href="#tuft" :x="t[0]" :y="t[1]" />
          <use v-for="(t, i) in bushes" :key="'b' + i" href="#bush" :x="t[0]" :y="t[1]" />
          <g v-for="(t, i) in tallTrees" :key="'tt' + i">
            <use href="#tree" :x="t[0]" :y="t[1] + 5" /><use href="#tree" :x="t[0]" :y="t[1] - 5" />
          </g>
          <use v-for="(t, i) in trees" :key="'t' + i" href="#tree" :x="t[0]" :y="t[1]" />
          <use v-for="(t, i) in poles" :key="'p' + i" href="#pole" :x="t[0]" :y="t[1]" />
          <rect v-for="(b, i) in boxes" :key="'q' + i" :x="b[0] - 2.5" :y="b[1] - 2.5" width="5" height="5" fill="none" stroke="#3a3ac4" />
          <circle v-for="(d, i) in specks" :key="'d' + i" :cx="d[0]" :cy="d[1]" r=".8" fill="#999" />
          <circle cx="776" cy="492" r="5.500" fill="#d5e6d3" stroke="#1d5a2c" stroke-width="1.600" />
          <path d="M773.500 489.500h5v5h-5zM774 492h4" fill="none" stroke="#2b7a3f" />
        </svg>
      </section>
    </div>
  </main>
</template>

<style>
body { margin: 0; overflow: hidden; }
</style>

<style scoped>
.app { display: flex; flex-direction: column; height: 100vh; background: #fff; color: #222; font: 10px/14px "Open Sans", "Noto Sans", sans-serif; overflow: hidden; }
* { box-sizing: border-box; }
button { font: inherit; color: inherit; background: none; border: 0; padding: 0; margin: 0; flex: none; }
svg { display: block; }

.menu { display: flex; height: 20px; align-items: center; flex: none; }
.menu-group { display: flex; gap: 14px; padding: 0 7px 0 9px; }
.menu-group + .menu-group { border-left: 1px solid #e2e2e2; gap: 13px; }
.menu button { color: #444; line-height: 18px; }

.bars { display: flex; height: 22px; flex: none; gap: 1px; }
.bars + .bars { height: 23px; }
.bar { display: flex; align-items: center; border: 1px solid #e6e6e6; border-left: 0; background: #fdfdfd; }
.grip { width: 8px; align-self: stretch; background-image: radial-gradient(#ccc 1px, transparent 1px); background-size: 3px 3px; background-clip: content-box; padding: 2px; flex: none; }
.group { display: flex; padding-right: 2px; margin-right: 3px; border-right: 1px solid #e8e8e8; }
.bar + .bar .group { margin-right: 2px; }
.bar .group:nth-last-child(2) { border: 0; padding: 0; margin: 0; }
.tool { width: 18px; height: 18px; display: grid; place-items: center; }
.tool svg { width: 18px; height: 18px; }
.tool.active { background: #cfe0f5; }
.more { width: 10px; height: 18px; display: flex; align-items: flex-end; justify-content: center; padding-bottom: 2px; }
.more::after { content: ""; border: 2px solid transparent; border-top: 3px solid #333; border-bottom: 0; }

.combo { display: flex; align-items: center; height: 19px; background: #fff; border: 1px solid #b5b5b5; border-top-color: #777; border-left: 2px solid #888; min-width: 0; }
select { appearance: none; flex: 1; min-width: 0; height: 100%; border: 0; background: none; padding: 0 2px; margin: 0; color: #222; font: inherit; outline: 0; }
.arrow { width: 12px; align-self: stretch; display: grid; place-items: center; background: #f2f2f2; border-right: 1px solid #999; border-bottom: 1px solid #999; flex: none; }
.arrow::after { content: ""; border: 3px solid transparent; border-top: 4px solid #111; border-bottom: 0; }
.state { width: 15px; height: 15px; flex: none; }
.swatch { width: 9px; height: 9px; background: #d01010; border: 1px solid #800; flex: none; margin: 0 1px 0 3px; }
.layer { width: 146px; margin: 0 6px 0 2px; }
.color { width: 84px; }
.types { width: 26px; padding-left: 8px; }
.weights { width: 27px; padding-left: 5px; }
.ltype { width: 110px; }
.weight { width: 72px; }
.stroke { width: 40px; height: 1px; background: #433; margin: 0 3px 0 4px; flex: none; }
.thick { width: 14px; height: 2px; margin: 0 2px; }
.weight select { padding: 0; }
.code { color: #555; padding: 0 3px 0 8px; }
.flat { width: 100px; border: 1px solid #ccc; }
.flat .arrow { background: none; border: 0; }
.flat .arrow::after { border-top-color: #777; }

.work { display: flex; flex: 1; min-height: 0; }
.rail { width: 22px; padding-top: 8px; flex: none; background: #fff; }
.rail-bar { display: flex; flex-direction: column; align-items: center; border-right: 1px solid #e4e4e4; border-bottom: 1px solid #e4e4e4; padding-bottom: 3px; }
.rail-bar .tool:nth-of-type(4n) { height: 19px; }
.side { width: 10px; height: 8px; align-self: flex-end; display: grid; place-items: center; }
.side::after { content: ""; border: 3px solid transparent; border-left: 3px solid #222; border-right: 0; }
.flatgrip { width: 20px; height: 8px; }
.modes { display: flex; flex-direction: column; align-items: center; align-self: stretch; border-top: 1px solid #e4e4e4; padding-top: 2px; }

.panel { display: flex; flex-direction: column; flex: none; background: #f0f0f0; }
.panel header { display: flex; align-items: center; flex: none; height: 18px; gap: 4px; }
.panel h2 { margin: 0; font: inherit; }
.drag { flex: 1; height: 6px; background: #cfcfcf; }
.pin { width: 10px; height: 10px; }
.pin svg { width: 10px; height: 10px; }
.picker { display: flex; align-items: flex-start; flex: none; height: 25px; }
.picker .combo { flex: 1; }
.sheet { flex: 1; min-height: 0; overflow: hidden; background: #fff; border: 1px solid #9db4d2; border-bottom: 0; }
.props { width: 234px; margin-left: 1px; border-left: 2px solid #dde3ea; border-right: 1px solid #dde3ea; }
.props header .drag { margin: 0 1px 0 3px; }
.props .combo { height: 17px; }
.props .picker { padding-right: 2px; gap: 5px; }
.props .sheet { margin: 0 2px 0 1px; border-left: 2px solid #8fabd6; border-right: 2px solid #9db4d2; }
.dots { width: 18px; height: 19px; border: 1px solid #333; background: #f7f7f7; }
.toc { width: 216px; margin-left: 7px; padding: 0 9px 0 4px; background: #cfe2f4; border-left: 1px solid #a8bcd0; border-right: 1px solid #dce7f2; }
.toc header { height: 19px; margin: 0 -5px 0 -3px; padding-right: 2px; background: #b7d4ec; }
.toc .drag { background: #4e6277; }
.toc .picker { gap: 7px; height: 26px; background: #f0f0f0; }
.raised { width: 18px; height: 19px; display: grid; place-items: center; background: #f3f3f3; border-right: 2px solid #888; border-bottom: 2px solid #888; border-top: 1px solid #fff; border-left: 1px solid #ddd; }
.raised svg { width: 12px; height: 12px; }

table { width: 100%; border-collapse: collapse; table-layout: fixed; }
.c-gut { width: 12px; }
.props .c-name { width: 101px; }
.toc .c-name { width: 88px; }
th, td { padding: 0 0 0 2px; height: 15px; line-height: 14px; text-align: left; border-bottom: 1px solid #d6e6f5; font-weight: 400; white-space: nowrap; overflow: hidden; }
.cat th { height: 14px; line-height: 13px; }
.cat.tall th { height: 15px; line-height: 14px; }
th { background: #d5e5fb; color: #2b4f8f; font-family: Lato, sans-serif; font-weight: 700; border-bottom-color: #c3d8ee; }
.gut { background: #d5e5fb; border-bottom-color: #d5e5fb; padding: 0 0 0 2px; }
.val { border-left: 1px solid #d6e6f5; }
.off { color: #888; }
.sel .name { background: #d5e5fb; }
.em { font-style: italic; }
.cell { display: flex; align-items: center; justify-content: space-between; height: 14px; }
.sub .cell { justify-content: flex-start; gap: 5px; }
.toggle { display: block; width: 7px; height: 7px; border: 1px solid #93a3b8; background: linear-gradient(#556, #556) center / 3px 1px no-repeat, #eef4fc; }
.toggle.plus { background: linear-gradient(#556, #556) center / 5px 1px no-repeat, linear-gradient(#556, #556) center / 1px 5px no-repeat, #eef4fc; }
.drop { width: 13px; height: 13px; display: grid; place-items: center; background: #b5cdec; border: 1px solid #6f8fbd; }
.drop::after { content: ""; border: 3px solid transparent; border-top: 3px solid #111; border-bottom: 0; }

.view { display: flex; flex-direction: column; flex: 1; min-width: 0; }
.tabs { display: flex; height: 23px; flex: none; padding-left: 2px; border-bottom: 1px solid #6f86b5; }
.tab { display: flex; align-items: center; gap: 15px; padding: 0 3px 0 14px; border: 1px solid #9aaccf; border-top: 2px solid #4a64a0; border-bottom: 0; }
.tab a { color: #35578f; text-decoration: none; }
.tab svg { width: 8px; height: 8px; }
.plan { flex: 1; min-height: 0; width: 100%; background: #fffdf0; }
.red path { fill: none; stroke: #cc4450; stroke-width: 1.200; }
.magenta path { fill: none; stroke: #dc52dc; stroke-width: 1.200; }
.green path { fill: none; stroke: #4be04b; stroke-width: 1.200; }
.green .hatched { fill: url(#hg); }
.blue path { fill: url(#hb); stroke: #3434c4; }
</style>
